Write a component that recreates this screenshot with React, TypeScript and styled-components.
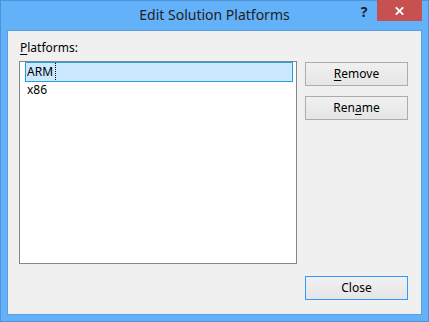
import styled, { createGlobalStyle } from "styled-components";

const GlobalStyle = createGlobalStyle`
	html, body {
		margin: 0;
		padding: 0;
		background: #ffffff;
	}
	body {
		font-family: "Noto Sans", "Liberation Sans", sans-serif;
		font-size: 12px;
		color: #000000;
	}
`;

const platforms = ["ARM", "x86"];

const App = () => {
	return (
		<>
			<GlobalStyle />
			<Window>
				<TitleBar>
					<span />
					<Title>Edit Solution Platforms</Title>
					<Controls>
						<HelpButton>?</HelpButton>
						<CloseButton aria-label="Close">
							<svg width="9" height="8" viewBox="0 0 9 8">
								<path d="M0.8 0.3 L8.2 7.7 M8.2 0.3 L0.8 7.7" stroke="#ffffff" strokeWidth="1.8" />
							</svg>
						</CloseButton>
					</Controls>
				</TitleBar>
				<Client>
					<Label>
						<u>P</u>latforms:
					</Label>
					<Body>
						<ListBox>
							{platforms.map((p, i) => (
								<Row key={p} $selected={i === 0}>
									<ItemText $focused={i === 0}>{p}</ItemText>
								</Row>
							))}
						</ListBox>
						<Side>
							<Button>
								<u>R</u>emove
							</Button>
							<Button>
								Ren<u>a</u>me
							</Button>
						</Side>
					</Body>
					<Footer>
						<Button $default>Close</Button>
					</Footer>
				</Client>
			</Window>
		</>
	);
};

export default App;

const Window = styled.div`
	box-sizing: border-box;
	width: 429px;
	height: 322px;
	display: flex;
	flex-direction: column;
	background: #63b1f8;
	border: 1px solid #4f92d8;
	padding: 0 6px 6px 6px;
`;

const TitleBar = styled.div`
	height: 29px;
	display: grid;
	grid-template-columns: 1fr auto 1fr;
	align-items: start;
	flex-shrink: 0;
`;

const Title = styled.div`
	font-size: 14px;
	line-height: 18px;
	padding-top: 5px;
	color: #1f1f1f;
	white-space: nowrap;
`;

const Controls = styled.div`
	display: flex;
	justify-content: flex-end;
	align-items: flex-start;
`;

const HelpButton = styled.div`
	width: 26px;
	height: 24px;
	text-align: center;
	font-weight: bold;
	font-size: 14px;
	line-height: 16px;
	padding-top: 3px;
	box-sizing: border-box;
	color: #1f1f1f;
`;

const CloseButton = styled.div`
	width: 45px;
	height: 21px;
	margin-top: -1px;
	background: #c75050;
	display: flex;
	align-items: center;
	justify-content: center;
`;

const Client = styled.div`
	flex: 1;
	display: flex;
	flex-direction: column;
	background: #f0f0f0;
	border: 1px solid #5a9fe2;
	padding: 9px 13px 14px 11px;
`;

const Label = styled.div`
	height: 15px;
	line-height: 15px;
	padding-left: 1px;
	margin-bottom: 6px;
	u {
		text-underline-offset: 2px;
	}
`;

const Body = styled.div`
	display: flex;
	gap: 8px;
	height: 203px;
`;

const ListBox = styled.div`
	flex: 1;
	box-sizing: border-box;
	background: #ffffff;
	border: 1px solid #828790;
	padding: 1px 4px 0 6px;
`;

const Row = styled.div<{ $selected?: boolean }>`
	display: flex;
	height: 18px;
	line-height: 18px;
	background: ${(p) => (p.$selected ? "#cce8ff" : "transparent")};
	outline: ${(p) => (p.$selected ? "1px solid #26a0da" : "none")};
`;

const ItemText = styled.span<{ $focused?: boolean }>`
	flex: none;
	height: 18px;
	padding: 0 2px 0 1px;
	outline: ${(p) => (p.$focused ? "1px dotted #000000" : "none")};
`;

const Side = styled.div`
	display: flex;
	flex-direction: column;
	gap: 10px;
	padding-top: 1px;
`;

const Button = styled.div<{ $default?: boolean }>`
	box-sizing: border-box;
	width: 103px;
	height: 24px;
	line-height: 22px;
	text-align: center;
	background: linear-gradient(#f0f0f0, #e5e5e5);
	border: 1px solid ${(p) => (p.$default ? "#3399ff" : "#acacac")};
	u {
		text-underline-offset: 2px;
	}
`;

const Footer = styled.div`
	display: flex;
	justify-content: flex-end;
	margin-top: 12px;
`;
